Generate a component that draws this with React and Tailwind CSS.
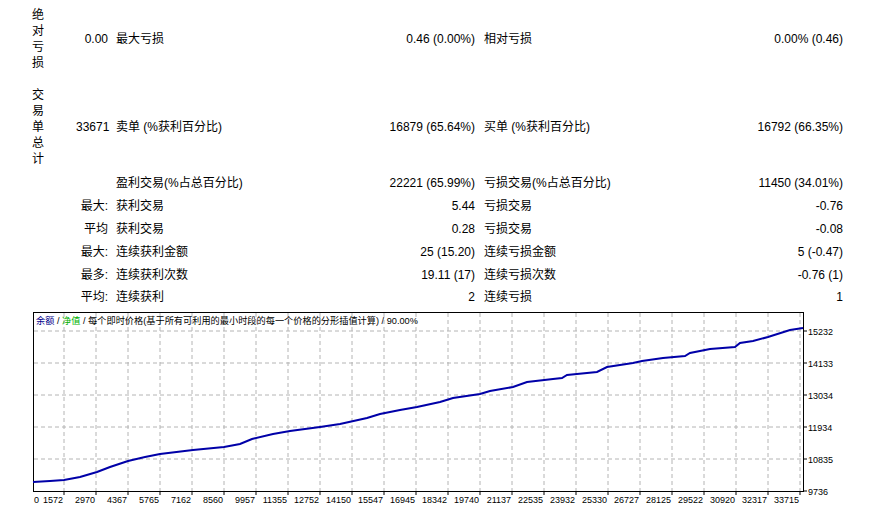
import React from 'react';

const FONT = { fontFamily: '"Liberation Sans", "Noto Sans CJK SC", sans-serif' };

const rows = [
    { tag: '', l1: '盈利交易(%占总百分比)', v2: '22221 (65.99%)', l2: '亏损交易(%占总百分比)', v3: '11450 (34.01%)' },
    { tag: '最大:', l1: '获利交易', v2: '5.44', l2: '亏损交易', v3: '-0.76' },
    { tag: '平均', l1: '获利交易', v2: '0.28', l2: '亏损交易', v3: '-0.08' },
    { tag: '最大:', l1: '连续获利金额', v2: '25 (15.20)', l2: '连续亏损金额', v3: '5 (-0.47)' },
    { tag: '最多:', l1: '连续获利次数', v2: '19.11 (17)', l2: '连续亏损次数', v3: '-0.76 (1)' },
    { tag: '平均:', l1: '连续获利', v2: '2', l2: '连续亏损', v3: '1' }
];

const xLabels = ['1572', '2970', '4367', '5765', '7162', '8560', '9957', '11355', '12752', '14150', '15547', '16945', '18342', '19740', '21137', '22535', '23932', '25330', '26727', '28125', '29522', '30920', '32317', '33715'];
const yLabels = ['15232', '14133', '13034', '11934', '10835', '9736'];

// page coords of the balance curve, y shifted into the svg below
const curve = [
    [33, 482], [50, 481], [64, 480], [80, 477], [97, 472], [110, 467], [128, 461], [145, 457], [160, 454],
    [193, 450], [224, 447], [240, 444], [252, 439], [273, 434], [290, 431], [320, 427], [340, 424], [367, 418],
    [380, 414], [400, 410], [417, 407], [440, 402], [453, 398], [480, 394], [490, 391], [513, 387], [527, 382],
    [553, 379], [562, 378], [567, 375], [597, 372], [607, 367], [633, 363], [642, 361], [663, 358], [685, 356],
    [690, 353], [710, 349], [735, 347], [740, 343], [753, 341], [768, 337], [790, 330], [803, 328]
];

const hLines = [26, 58, 90, 122, 154];
const vLines = xLabels.map((_, i) => 64 + 32 * i);

const Vertical = ({ text }) => (
    <div className="w-[76px] flex flex-col items-center leading-[16px]">
        {text.split('').map((c, i) => (
            <span key={i}>{c}</span>
        ))}
    </div>
);

const Row = ({ left, v1, l1, v2, l2, v3, className }) => (
    <div className={`flex items-center ${className}`}>
        {left}
        <div className="w-[32px] text-right whitespace-nowrap">{v1}</div>
        <div className="w-[359px] ml-[8px] flex justify-between whitespace-nowrap">
            <span>{l1}</span>
            <span>{v2}</span>
        </div>
        <div className="w-[359px] ml-[9px] flex justify-between whitespace-nowrap">
            <span>{l2}</span>
            <span>{v3}</span>
        </div>
    </div>
);

const Chart = () => {
    const pts = curve.map(([x, y]) => `${x},${y - 305}`).join(' ');
    return (
        <svg width="870" height="205" viewBox="0 0 870 205" className="block" style={FONT}>
            {hLines.map((y) => (
                <line key={y} x1="34" x2="803" y1={y} y2={y} stroke="#b4b4b4" strokeWidth="1" strokeDasharray="4 3" />
            ))}
            {vLines.map((x) => (
                <line key={x} x1={x} x2={x} y1="8" y2="186" stroke="#b4b4b4" strokeWidth="1" strokeDasharray="4 3" />
            ))}
            <rect x="33.5" y="7.5" width="770" height="179" fill="none" stroke="#000" strokeWidth="1" />
            {vLines.map((x) => (
                <line key={x} x1={x} x2={x} y1="187" y2="190" stroke="#000" strokeWidth="1" />
            ))}
            {[...hLines, 186].map((y) => (
                <line key={y} x1="804" x2="807" y1={y} y2={y} stroke="#000" strokeWidth="1" />
            ))}
            <polyline points={pts} fill="none" stroke="#0000a8" strokeWidth="2" />
            <text x="36" y="19" fontSize="9.2" fill="#000">
                <tspan fill="#00008b">余额</tspan>
                <tspan> / </tspan>
                <tspan fill="#00b000">净值</tspan>
                <tspan> / 每个即时价格(基于所有可利用的最小时段的每一个价格的分形插值计算) / 90.00%</tspan>
            </text>
            {yLabels.map((t, i) => (
                <text key={t} x="808" y={26 + 32 * i + 3.5} fontSize="9" fill="#000">{t}</text>
            ))}
            <text x="34" y="197.5" fontSize="9" fill="#000">0</text>
            {xLabels.map((t, i) => (
                <text key={t} x={63 + 32 * i} y="197.5" fontSize="9" fill="#000" textAnchor="end">{t}</text>
            ))}
        </svg>
    );
};

export default function App() {
    return (
        <div className="w-[870px] h-[510px] bg-white text-black text-[12px] overflow-hidden" style={FONT}>
            <div className="h-[305px]">
                <Row
                    className="h-[78px]"
                    left={<Vertical text="绝对亏损" />}
                    v1="0.00"
                    l1="最大亏损"
                    v2="0.46 (0.00%)"
                    l2="相对亏损"
                    v3="0.00% (0.46)"
                />
                <Row
                    className="h-[94px] pt-[4px]"
                    left={<Vertical text="交易单总计" />}
                    v1="33671"
                    l1="卖单 (%获利百分比)"
                    v2="16879 (65.64%)"
                    l2="买单 (%获利百分比)"
                    v3="16792 (66.35%)"
                />
                {rows.map((r, i) => (
                    <Row
                        key={i}
                        className="h-[22.8px]"
                        left={<div className="w-[76px]" />}
                        v1={r.tag}
                        l1={r.l1}
                        v2={r.v2}
                        l2={r.l2}
                        v3={r.v3}
                    />
                ))}
            </div>
            <Chart />
        </div>
    );
}
